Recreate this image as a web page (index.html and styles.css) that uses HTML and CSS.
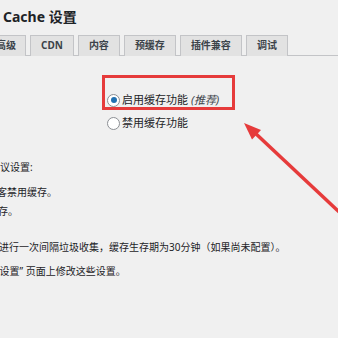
FILE: index.html
```html
<!DOCTYPE html>
<html lang="zh-CN">
<head>
    <meta charset="UTF-8">
    <meta name="viewport" content="width=device-width, initial-scale=1.0">
    <title>WP Super Cache 设置</title>
    <link rel="stylesheet" href="styles.css">
</head>
<body>
    <div class="wrap">
        <h1>Cache 设置</h1>

        <nav class="nav-tabs">
            <a class="nav-tab first">高级</a>
            <a class="nav-tab">CDN</a>
            <a class="nav-tab">内容</a>
            <a class="nav-tab">预缓存</a>
            <a class="nav-tab">插件兼容</a>
            <a class="nav-tab">调试</a>
        </nav>

        <div class="options">
            <div class="highlight">
                <label class="choice">
                    <input type="radio" name="caching" checked>
                    <span>启用缓存功能 <em>(推荐)</em></span>
                </label>
            </div>
            <label class="choice second">
                <input type="radio" name="caching">
                <span>禁用缓存功能</span>
            </label>
        </div>

        <div class="notes">
            <p class="l1">将使用以下建议设置:</p>
            <p class="l2">为已登录访客禁用缓存。</p>
            <p class="l3">使用简单模式缓存。</p>
            <p class="l4">每十分钟进行一次间隔垃圾收集，缓存生存期为30分钟（如果尚未配置）。</p>
            <p class="l5">您可以在“高级设置” 页面上修改这些设置。</p>
        </div>
    </div>

    <!-- flecha de anotación -->
    <svg class="arrow" width="338" height="338" viewBox="0 0 338 338">
        <line x1="352" y1="224" x2="254" y2="132" stroke="#e63b3b" stroke-width="3.5"/>
        <polygon points="244,123 252,139.5 261,130" fill="#e63b3b"/>
    </svg>
</body>
</html>
```

FILE: styles.css
```css
body {
    margin: 0;
    width: 338px;
    height: 338px;
    overflow: hidden;
    position: relative;
    background-color: #f0f0f0;
    color: #1d2327;
    font-family: "Noto Sans", "Noto Sans CJK SC", sans-serif;
}
.wrap {
    width: 338px;
}
h1 {
    margin: 0;
    padding: 7px 0 0 3px;
    font-size: 14px;
    line-height: 20px;
    font-weight: 700;
}
.nav-tabs {
    display: flex;
    gap: 4px;
    margin: 8px 0 0 -20px;
    border-bottom: 1px solid #c3c4c7;
    height: 20px;
}
.nav-tab {
    box-sizing: border-box;
    height: 21px;
    padding: 0 10px;
    border: 1px solid #c3c4c7;
    border-bottom: none;
    background-color: #e2e2e2;
    color: #3c434a;
    font-size: 10px;
    font-weight: 700;
    line-height: 19px;
}
.nav-tab.first {
    width: 46px;
    text-align: right;
    padding-right: 9px;
}
.options {
    margin: 19px 0 0 102px;
    font-size: 11px;
}
.highlight {
    width: 125px;
    height: 14px;
    padding: 15px 0 0 2px;
    border: 3px solid #e63b3b;
    box-sizing: content-box;
}
.choice {
    display: flex;
    align-items: center;
    gap: 2px;
    height: 14px;
    line-height: 14px;
    white-space: nowrap;
}
.choice.second {
    margin: 6px 0 0 5px;
}
.choice em {
    color: #3c434a;
}
.choice input {
    appearance: none;
    margin: 0;
    width: 13px;
    height: 13px;
    border: 1px solid #8c8f94;
    border-radius: 50%;
    background-color: #fff;
    box-sizing: border-box;
    display: grid;
    place-items: center;
}
.choice input:checked::before {
    content: "";
    width: 6px;
    height: 6px;
    border-radius: 50%;
    background-color: #2271b1;
}
.notes {
    margin: 29px 0 0 -60px;
    font-size: 10px;
    line-height: 16px;
    white-space: nowrap;
}
.notes p {
    margin: 0;
}
.l2 {
    margin-top: 9px !important;
    padding-left: 7px;
}
.l3 {
    margin: 3px 0 0 -12px !important;
}
.l4 {
    margin: 20px 0 0 19px !important;
}
.l5 {
    margin: 8px 0 0 -4px !important;
}
.arrow {
    position: absolute;
    left: 0;
    top: 0;
}
```
